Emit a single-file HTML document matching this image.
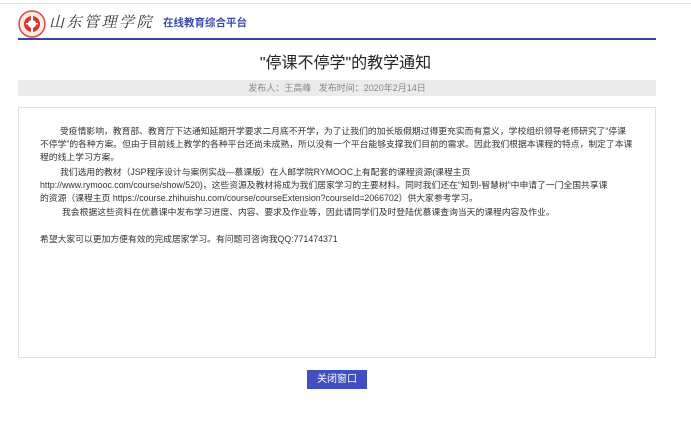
<!DOCTYPE html>
<html><head><meta charset="utf-8"><style>
body{margin:0;width:691px;height:426px;background:#fff;font-family:"Liberation Sans","Noto Sans CJK SC",sans-serif;position:relative;overflow:hidden}
.top{position:absolute;left:0;top:3px;width:691px;height:1px;background:#e4e4ec}
.logo{position:absolute;left:18px;top:10px}
.brand{position:absolute;left:49px;top:12px;font-family:"Noto Serif CJK SC",serif;font-size:15px;color:#333;font-style:italic;letter-spacing:2.5px;line-height:20px}
.sub{position:absolute;left:163px;top:16px;font-size:10.5px;color:#3a4aa8;font-weight:bold;line-height:14px}
.blue{position:absolute;left:18px;top:38px;width:638px;height:2px;background:#3a41a0}
.title{position:absolute;left:0;width:691px;top:49px;text-align:center;font-size:16px;color:#222}
.meta{position:absolute;left:18px;top:80px;width:638px;height:16px;background:#ebebeb;font-size:9px;color:#888;line-height:16px;text-align:center}
.box{position:absolute;left:18px;top:107px;width:636px;height:249px;border:1px solid #e6ddd8}
.t{position:absolute;left:40px;font-size:8.8px;color:#333;white-space:nowrap;line-height:12px}
.btn{position:absolute;left:307px;top:370px;width:60px;height:19px;background:#3f4fc0;color:#fff;font-size:10px;text-align:center;line-height:19px}
</style></head><body>
<div class="top"></div>
<svg class="logo" width="28" height="28" viewBox="0 0 28 28"><circle cx="14" cy="14" r="13" fill="#fbe9e6" stroke="#d24a3a" stroke-width="1.5"/><circle cx="14" cy="14" r="8" fill="#d23a2a"/><circle cx="14" cy="14" r="4" fill="#fff"/><rect x="13" y="6" width="2" height="16" fill="#fff"/><rect x="8" y="13" width="12" height="1.5" fill="#fff"/></svg>
<div class="brand">山东管理学院</div>
<div class="sub">在线教育综合平台</div>
<div class="blue"></div>
<div class="title">"停课不停学"的教学通知</div>
<div class="meta">发布人：王高峰 &nbsp;&nbsp;发布时间：2020年2月14日</div>
<div class="box"></div>
<div class="t" style="top:125px;left:60px">受疫情影响，教育部、教育厅下达通知延期开学要求二月底不开学，为了让我们的加长版假期过得更充实而有意义，学校组织领导老师研究了“停课</div>
<div class="t" style="top:138px">不停学”的各种方案。但由于目前线上教学的各种平台还尚未成熟，所以没有一个平台能够支撑我们目前的需求。因此我们根据本课程的特点，制定了本课</div>
<div class="t" style="top:151px">程的线上学习方案。</div>
<div class="t" style="top:166px;left:60px">我们选用的教材（JSP程序设计与案例实战—慕课版）在人邮学院RYMOOC上有配套的课程资源(课程主页</div>
<div class="t" style="top:179px">http://www.rymooc.com/course/show/520)，这些资源及教材将成为我们居家学习的主要材料。同时我们还在“知到-智慧树”中申请了一门全国共享课</div>
<div class="t" style="top:192px">的资源（课程主页 https://course.zhihuishu.com/course/courseExtension?courseId=2066702）供大家参考学习。</div>
<div class="t" style="top:206px;left:62px">我会根据这些资料在优慕课中发布学习进度、内容、要求及作业等，因此请同学们及时登陆优慕课查询当天的课程内容及作业。</div>
<div class="t" style="top:233px">希望大家可以更加方便有效的完成居家学习。有问题可咨询我QQ:771474371</div>
<div class="btn">关闭窗口</div>
</body></html>
